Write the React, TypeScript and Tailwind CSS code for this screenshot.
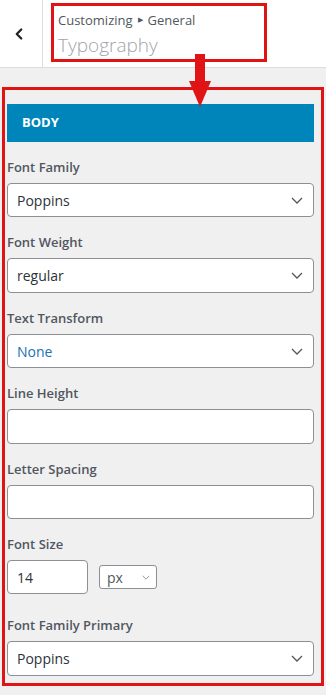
import { ChevronLeft } from 'lucide-react'

const font = { fontFamily: '"Open Sans", "Noto Sans", sans-serif' }

function Chevron({ small }: { small?: boolean }) {
  return (
    <svg width={small ? 8 : 12} height={small ? 5 : 7} viewBox="0 0 12 7" fill="none" className="shrink-0">
      <path d="M1 1l5 5 5-5" stroke={small ? '#8c8f94' : '#50575e'} strokeWidth={small ? 1.4 : 1.3} />
    </svg>
  )
}

function Label({ text, wide }: { text: string; wide?: boolean }) {
  return (
    <div className={`h-[20px] leading-[20px] text-[13px] font-semibold text-[#50575e] mb-[6px] ${wide ? 'mt-[21px]' : 'mt-[15px]'}`}>
      {text}
    </div>
  )
}

function Select({ value, blue, tall }: { value: string; blue?: boolean; tall?: boolean }) {
  return (
    <div className={`${tall ? 'h-[35px]' : 'h-[34px]'} bg-white border border-[#8c8f94] rounded-[4px] flex items-center justify-between pl-[9px] pr-[10px]`}>
      <span className={`text-[14px] ${blue ? 'text-[#2271b1]' : 'text-[#2c3338]'}`}>{value}</span>
      <Chevron />
    </div>
  )
}

function TextInput({ tall }: { tall?: boolean }) {
  return <div className={`${tall ? 'h-[35px]' : 'h-[34px]'} bg-white border border-[#8c8f94] rounded-[4px]`} />
}

export default function App() {
  return (
    <div className="relative w-[326px] h-[695px] bg-[#f0f0f1] overflow-hidden" style={font}>
      <div className="h-[68px] bg-white border-b border-[#dcdcde] flex">
        <div className="w-[43px] border-r border-[#dcdcde] flex items-center justify-center">
          <ChevronLeft size={18} strokeWidth={3} className="text-[#1d2327] -ml-[5px]" />
        </div>
        <div className="ml-[8px] mt-[3px] w-[216px] h-[59px] border-[3px] border-[#e01414] pl-[4px] pt-[4px]">
          <div className="text-[13px] text-[#50575e] leading-[20px] flex items-center gap-[5px]">
            Customizing <span className="text-[7px]">▶</span> General
          </div>
          <div className="text-[19px] font-light text-[#a0a5aa] leading-[26px] mt-[2px]">Typography</div>
        </div>
      </div>

      <div className="mt-[19px] mx-[2px] border-[3px] border-[#e01414] pl-[2px] pr-[7px] pt-[14px] pb-[7px]">
        <div className="h-[38px] bg-[#0085ba] flex items-center pl-[15px] text-white font-bold text-[13px]">BODY</div>

        <Label text="Font Family" />
        <Select value="Poppins" />

        <Label text="Font Weight" />
        <Select value="regular" tall />

        <Label text="Text Transform" />
        <Select value="None" blue />

        <Label text="Line Height" />
        <TextInput tall />

        <Label text="Letter Spacing" />
        <TextInput />

        <Label text="Font Size" />
        <div className="flex items-center gap-[11px]">
          <div className="w-[81px] h-[34px] bg-white border border-[#8c8f94] rounded-[4px] flex items-center pl-[9px] text-[14px] text-[#2c3338]">
            14
          </div>
          <div className="w-[58px] h-[24px] bg-white border border-[#8c8f94] rounded-[3px] flex items-center justify-between pl-[7px] pr-[6px] text-[14px] text-[#50575e]">
            px
            <Chevron small />
          </div>
        </div>

        <Label text="Font Family Primary" wide />
        <Select value="Poppins" tall />
      </div>

      <div className="absolute left-[195px] top-[54px] w-[10px] h-[30px] bg-[#e01414]" />
      <svg className="absolute left-[189px] top-[81px]" width="22" height="26" viewBox="0 0 22 26">
        <path d="M0 0h22L11 26z" fill="#e01414" />
      </svg>
    </div>
  )
}
